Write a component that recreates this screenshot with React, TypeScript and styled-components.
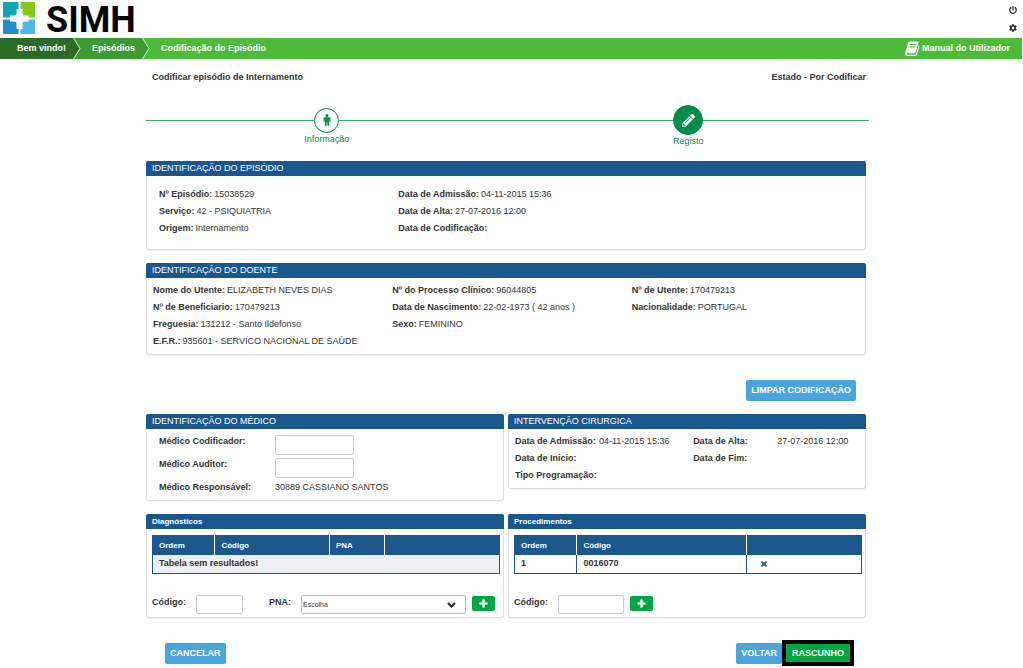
import React from "react";
import styled, { createGlobalStyle } from "styled-components";
import { FaCog, FaPencilAlt, FaPlus, FaPowerOff, FaTimes } from "react-icons/fa";

const color = {
  text: "#333",
  blue: "#1a578d",
  sky: "#4aa5de",
  green: "#00a63f",
  step: "#008d49",
  line: "#ddd",
};

const GlobalStyle = createGlobalStyle`
  *, *::before, *::after { box-sizing: border-box; }
  body {
    margin: 0;
    background: #fff;
    color: ${color.text};
    font: 9px/17px "Liberation Sans", Arial, sans-serif;
  }
  button, input, select { font: inherit; color: inherit; }
  h1, h2, p, dl, dd, ol { margin: 0; padding: 0; }
`;

const Header = styled.header`
  display: flex;
  justify-content: space-between;
  height: 38px;
  padding: 0 6px 0 3px;
`;

const Brand = styled.a`
  display: flex;
  align-items: flex-start;
  gap: 10px;
  padding-top: 2px;
  color: #000;
  text-decoration: none;
`;

const BrandName = styled.span`
  font: bold 36px/36px Roboto, "Liberation Sans", sans-serif;
`;

const HeaderTools = styled.div`
  display: flex;
  flex-direction: column;
  gap: 10px;
  padding-top: 6px;
`;

const IconButton = styled.button`
  display: flex;
  padding: 0;
  border: 0;
  background: none;
  color: ${color.text};
  font-size: 8px;
  cursor: pointer;
`;

const NavBar = styled.nav`
  display: flex;
  justify-content: space-between;
  height: 21px;
  margin-right: 1px;
  background: #4cbb38;
  color: #fff;
  font-weight: bold;
  line-height: 21px;
`;

const Crumbs = styled.ol`
  display: flex;
  list-style: none;
`;

const Crumb = styled.li<{ $bg: string; $start: number }>`
  display: flex;
  gap: 7px;
  padding-left: ${(p) => p.$start}px;
  background: ${(p) => p.$bg};
`;

const NavLink = styled.a`
  display: flex;
  align-items: center;
  gap: 2px;
  color: #fff;
  text-decoration: none;
`;

const ManualLink = styled(NavLink)`
  padding-right: 12px;
`;

const Main = styled.main`
  padding: 0 157px 2px 146px;
`;

const TitleRow = styled.div`
  display: flex;
  justify-content: space-between;
  padding: 10px 0 0 6px;
`;

const Title = styled.h1`
  font-size: 9px;
  font-weight: bold;
`;

const Steps = styled.ol`
  display: grid;
  grid-template-columns: 1fr 1fr;
  align-items: center;
  margin: 19px -3px 0 0;
  list-style: none;
  color: ${color.step};
`;

const Step = styled.li`
  display: flex;
  flex-direction: column;
  align-items: center;
  line-height: 13px;
`;

const StepTrack = styled.div`
  display: flex;
  align-items: center;
  width: 100%;

  &::before, &::after {
    content: "";
    flex: 1;
    height: 1px;
    background: #3aa873;
  }
`;

const StepDot = styled.span<{ $active?: boolean }>`
  display: flex;
  align-items: center;
  justify-content: center;
  width: ${(p) => (p.$active ? 30 : 25)}px;
  height: ${(p) => (p.$active ? 30 : 25)}px;
  border: 1px solid ${color.step};
  border-radius: 50%;
  background: ${(p) => (p.$active ? color.step : "#fff")};
  color: ${(p) => (p.$active ? "#fff" : color.step)};
  font-size: 13px;
`;

const PanelBox = styled.section`
  margin-top: 13px;
`;

const PanelHead = styled.h2<{ $small?: boolean }>`
  padding-left: 6px;
  border-radius: 2px 2px 0 0;
  background: ${color.blue};
  color: #fff;
  font-size: ${(p) => (p.$small ? 8 : 9)}px;
  font-weight: ${(p) => (p.$small ? "bold" : "normal")};
  line-height: 15px;
`;

const PanelBody = styled.div<{ $pad: string }>`
  padding: ${(p) => p.$pad};
  border: 1px solid ${color.line};
  border-top: 0;
  border-radius: 0 0 3px 3px;
  box-shadow: 0 1px 1px #0000000d;
`;

const Facts = styled.dl`
  display: grid;
  grid-template-columns: repeat(3, 1fr);
`;

const FactItem = styled.div<{ $indent: number }>`
  display: flex;
  gap: 2px;
  min-height: 17px;
  padding-left: ${(p) => p.$indent}px;
  white-space: nowrap;
`;

const Term = styled.dt`
  font-weight: bold;
`;

const Halves = styled.div`
  display: grid;
  grid-template-columns: 1fr 1fr;
  align-items: start;
  column-gap: 4px;
`;

const Dates = styled.dl`
  display: grid;
  grid-template-columns: 84px 15fr 84px 14fr;
  white-space: nowrap;
`;

const DoctorForm = styled.div`
  display: grid;
  grid-template-columns: 116px 1fr;
  row-gap: 3px;
  line-height: 13px;
`;

const Label = styled.label`
  font-weight: bold;
`;

const TextInput = styled.input<{ $w: number }>`
  width: ${(p) => p.$w}px;
  height: 20px;
  padding: 0 4px;
  border: 1px solid #ccc;
  border-radius: 2px;
  background: #fff;
`;

const Actions = styled.div<{ $top: number; $between?: boolean }>`
  display: flex;
  align-items: center;
  justify-content: ${(p) => (p.$between ? "space-between" : "flex-end")};
  margin-top: ${(p) => p.$top}px;
  padding: ${(p) => (p.$between ? "0 12px 0 19px" : "0 10px 0 0")};
`;

const ButtonPair = styled.div`
  display: flex;
  align-items: center;
`;

const Button = styled.button`
  height: 21px;
  padding: 0 5px;
  border: 0;
  border-radius: 2px;
  background: ${color.sky};
  color: #fff;
  font-weight: bold;
  white-space: nowrap;
  cursor: pointer;
`;

const DraftButton = styled(Button)`
  height: 26px;
  padding: 0 6px;
  border: 4px solid #000;
  border-radius: 0;
  background: ${color.green};
`;

const AddButton = styled.button`
  display: flex;
  align-items: center;
  justify-content: center;
  width: 23px;
  height: 15px;
  margin-top: 1px;
  padding: 0;
  border: 0;
  border-radius: 2px;
  background: ${color.green};
  color: #fff;
  font-size: 9px;
  cursor: pointer;

  svg { stroke: currentColor; stroke-width: 40px; }
`;

const Table = styled.table`
  width: 100%;
  border: 1px solid ${color.blue};
  border-collapse: collapse;
  table-layout: fixed;
  font-weight: bold;
  text-align: left;

  th, td { height: 19px; padding: 0 6px; line-height: 17px; }
  th { background: ${color.blue}; color: #fff; font-size: 8px; }
  th + th { border-left: 1px solid #fff; }
  td + td { border-left: 1px solid ${color.blue}; }
`;

const EmptyCell = styled.td`
  background: #ecf0f2;
`;

const DeleteButton = styled(IconButton)`
  margin-left: 7px;
  color: #2460a8;

  svg { stroke: currentColor; stroke-width: 40px; }
`;

const AddRow = styled.div`
  display: flex;
  align-items: flex-start;
  height: 20px;
  margin-top: 21px;
  padding-right: 5px;
  line-height: 15px;
`;

const CodeLabel = styled(Label)`
  width: 44px;
`;

const PnaLabel = styled(Label)`
  width: 32px;
  margin-left: 26px;
`;

const SelectBox = styled.div`
  position: relative;
  flex: 1;
  height: 19px;
  margin-right: 6px;

  svg { position: absolute; right: 10px; top: 7px; pointer-events: none; }
`;

const Select = styled.select`
  display: block;
  width: 100%;
  height: 19px;
  padding: 0 1px;
  border: 1px solid #bbb;
  border-radius: 2px;
  background: #fff;
  font-size: 7px;
  appearance: none;
`;

const CodeInput = styled(TextInput)`
  height: 19px;
`;

const ProcedureInput = styled(CodeInput)`
  margin-right: 6px;
`;

const Logo = () => (
  <svg width="33" height="33" viewBox="0 0 33 33" aria-hidden="true">
    <rect x="0" y="0" width="16" height="16" rx="1" fill="#12a3b4" />
    <rect x="17" y="0" width="15" height="16" rx="1" fill="#86c81d" />
    <rect x="0" y="17" width="16" height="15" rx="1" fill="#1f8fcf" />
    <rect x="17" y="17" width="15" height="15" rx="1" fill="#50b7ea" />
    <path d="M15.500 0h2v32h-2zM0 15.500h32v2H0z" fill="#fff" />
    <path
      d="M13.500 7h6v4q0 2.500 2.500 2.500h3.500v6H22q-2.500 0-2.500 2.500v5h-6v-5q0-2.500-2.500-2.500H7v-6h4q2.500 0 2.500-2.500z"
      fill="#fff"
    />
  </svg>
);

const Chevron = ({ next }: { next: string }) => (
  <svg width="8" height="21" viewBox="0 0 8 21" aria-hidden="true">
    <path d="M0 0h8v21H0L7 10.500z" fill={next} />
    <path d="M.5 0L7 10.500.5 21" fill="none" stroke="#d7f0d0" />
  </svg>
);

const Book = () => (
  <svg width="15" height="15" viewBox="0 0 15 15" aria-hidden="true">
    <path
      d="M5 .5h7.500q1.300 0 .9 1.400L10.700 11q-.4 1.200-1.600 1.200H2.400q-1 0-.7.900.2.600 1 .6h7.200q.9 0 1.200-.9l2.500-8.300q1 .5.700 1.500l-2.400 7.700q-.4 1.300-1.700 1.300H2.400Q.6 15 .2 13.300q-.3-.9 0-1.900L3 2Q3.500.5 5 .5z"
      fill="#fff"
    />
    <path d="M5.500 3.500h5.500M4.700 6h5.500" stroke="#4cbb38" strokeWidth="1" />
  </svg>
);

const Person = () => (
  <svg width="8" height="12" viewBox="0 0 8 12" fill="currentColor" aria-hidden="true">
    <circle cx="4" cy="1.500" r="1.500" />
    <path d="M1.800 3.300h4.400q1.300 0 1.300 1.300v2.700q0 .6-.6.600t-.6-.6V5.200H6v6q0 .8-.8.800t-.8-.8V8.200h-.8v3q0 .8-.8.800T2 11.200v-6h-.3v2.100q0 .6-.6.600t-.6-.6V4.600q0-1.300 1.300-1.300z" />
  </svg>
);

const Fact = ({ label, value, indent = 6 }: { label: string; value?: string; indent?: number }) => (
  <FactItem $indent={indent}>
    <Term>{label}</Term>
    <dd>{value}</dd>
  </FactItem>
);

type PanelProps = { title: string; pad: string; small?: boolean; children: React.ReactNode };

const Panel = ({ title, pad, small, children }: PanelProps) => (
  <PanelBox>
    <PanelHead $small={small}>{title}</PanelHead>
    <PanelBody $pad={pad}>{children}</PanelBody>
  </PanelBox>
);

export default function App() {
  return (
    <>
      <GlobalStyle />
      <Header>
        <Brand href="#" aria-label="SIMH">
          <Logo />
          <BrandName>SIMH</BrandName>
        </Brand>
        <HeaderTools>
          <IconButton aria-label="Sair"><FaPowerOff /></IconButton>
          <IconButton aria-label="Definições"><FaCog /></IconButton>
        </HeaderTools>
      </Header>

      <NavBar>
        <Crumbs>
          <Crumb $bg="#2b6b27" $start={17}>
            <NavLink href="#">Bem vindo!</NavLink>
            <Chevron next="#3c9c31" />
          </Crumb>
          <Crumb $bg="#3c9c31" $start={11}>
            <NavLink href="#">Episódios</NavLink>
            <Chevron next="#4cbb38" />
          </Crumb>
          <Crumb $bg="#4cbb38" $start={11}>
            <NavLink href="#">Codificação do Episódio</NavLink>
          </Crumb>
        </Crumbs>
        <ManualLink href="#"><Book />Manual do Utilizador</ManualLink>
      </NavBar>

      <Main>
        <TitleRow>
          <Title>Codificar episódio de Internamento</Title>
          <Title as="p">Estado - Por Codificar</Title>
        </TitleRow>

        <Steps>
          <Step>
            <StepTrack><StepDot><Person /></StepDot></StepTrack>
            Informação
          </Step>
          <Step>
            <StepTrack><StepDot $active><FaPencilAlt /></StepDot></StepTrack>
            Registo
          </Step>
        </Steps>

        <Panel title="IDENTIFICAÇÃO DO EPISÓDIO" pad="10px 0 12px">
          <Facts>
            <Fact indent={12} label="Nº Episódio:" value="15038529" />
            <Fact indent={12} label="Data de Admissão:" value="04-11-2015 15:36" />
            <span />
            <Fact indent={12} label="Serviço:" value="42 - PSIQUIATRIA" />
            <Fact indent={12} label="Data de Alta:" value="27-07-2016 12:00" />
            <span />
            <Fact indent={12} label="Origem:" value="Internamento" />
            <Fact indent={12} label="Data de Codificação:" />
          </Facts>
        </Panel>

        <Panel title="IDENTIFICAÇÃO DO DOENTE" pad="4px 0">
          <Facts>
            <Fact label="Nome do Utente:" value="ELIZABETH NEVES DIAS" />
            <Fact label="Nº do Processo Clínico:" value="96044805" />
            <Fact label="Nº de Utente:" value="170479213" />
            <Fact label="Nº de Beneficiario:" value="170479213" />
            <Fact label="Data de Nascimento:" value="22-02-1973 ( 42 anos )" />
            <Fact label="Nacionalidade:" value="PORTUGAL" />
            <Fact label="Freguesia:" value="131212 - Santo Ildefonso" />
            <Fact label="Sexo:" value="FEMININO" />
            <span />
            <Fact label="E.F.R.:" value="935601 - SERVICO NACIONAL DE SAÚDE" />
          </Facts>
        </Panel>

        <Actions $top={25}>
          <Button>LIMPAR CODIFICAÇÃO</Button>
        </Actions>

        <Halves>
          <Panel title="IDENTIFICAÇÃO DO MÉDICO" pad="6px 12px">
            <DoctorForm>
              <Label htmlFor="codificador">Médico Codificador:</Label>
              <TextInput id="codificador" $w={79} />
              <Label htmlFor="auditor">Médico Auditor:</Label>
              <TextInput id="auditor" $w={79} />
              <Label as="span">Médico Responsável:</Label>
              <span>30889 CASSIANO SANTOS</span>
            </DoctorForm>
          </Panel>
          <Panel title="INTERVENÇÃO CIRURGICA" pad="4px 0 4px 6px">
            <Dates>
              <Term>Data de Admissão:</Term>
              <dd>04-11-2015 15:36</dd>
              <Term>Data de Alta:</Term>
              <dd>27-07-2016 12:00</dd>
              <Term>Data de Inicio:</Term>
              <dd />
              <Term>Data de Fim:</Term>
              <dd />
              <Term>Tipo Programação:</Term>
              <dd />
            </Dates>
          </Panel>
        </Halves>

        <Halves>
          <Panel small title="Diagnósticos" pad="6px 3px 2px 5px">
            <Table>
              <colgroup>
                <col width="18%" />
                <col width="33%" />
                <col width="16%" />
                <col />
              </colgroup>
              <thead>
                <tr><th>Ordem</th><th>Código</th><th>PNA</th><th /></tr>
              </thead>
              <tbody>
                <tr><EmptyCell colSpan={4}>Tabela sem resultados!</EmptyCell></tr>
              </tbody>
            </Table>
            <AddRow>
              <CodeLabel htmlFor="diagnostico">Código:</CodeLabel>
              <CodeInput id="diagnostico" $w={47} />
              <PnaLabel htmlFor="pna">PNA:</PnaLabel>
              <SelectBox>
                <Select id="pna"><option>Escolha</option></Select>
                <svg width="9" height="6" viewBox="0 0 9 6" aria-hidden="true">
                  <path d="M1 1l3.500 3.500L8 1" fill="none" stroke="#222" strokeWidth="2" />
                </svg>
              </SelectBox>
              <AddButton aria-label="Adicionar diagnóstico"><FaPlus /></AddButton>
            </AddRow>
          </Panel>
          <Panel small title="Procedimentos" pad="6px 3px 2px 5px">
            <Table>
              <colgroup>
                <col width="18%" />
                <col width="49%" />
                <col />
              </colgroup>
              <thead>
                <tr><th>Ordem</th><th>Código</th><th /></tr>
              </thead>
              <tbody>
                <tr>
                  <td>1</td>
                  <td>0016070</td>
                  <td><DeleteButton aria-label="Remover"><FaTimes /></DeleteButton></td>
                </tr>
              </tbody>
            </Table>
            <AddRow>
              <CodeLabel htmlFor="procedimento">Código:</CodeLabel>
              <ProcedureInput id="procedimento" $w={66} />
              <AddButton aria-label="Adicionar procedimento"><FaPlus /></AddButton>
            </AddRow>
          </Panel>
        </Halves>

        <Actions $top={22} $between>
          <Button>CANCELAR</Button>
          <ButtonPair>
            <Button>VOLTAR</Button>
            <DraftButton>RASCUNHO</DraftButton>
          </ButtonPair>
        </Actions>
      </Main>
    </>
  );
}
